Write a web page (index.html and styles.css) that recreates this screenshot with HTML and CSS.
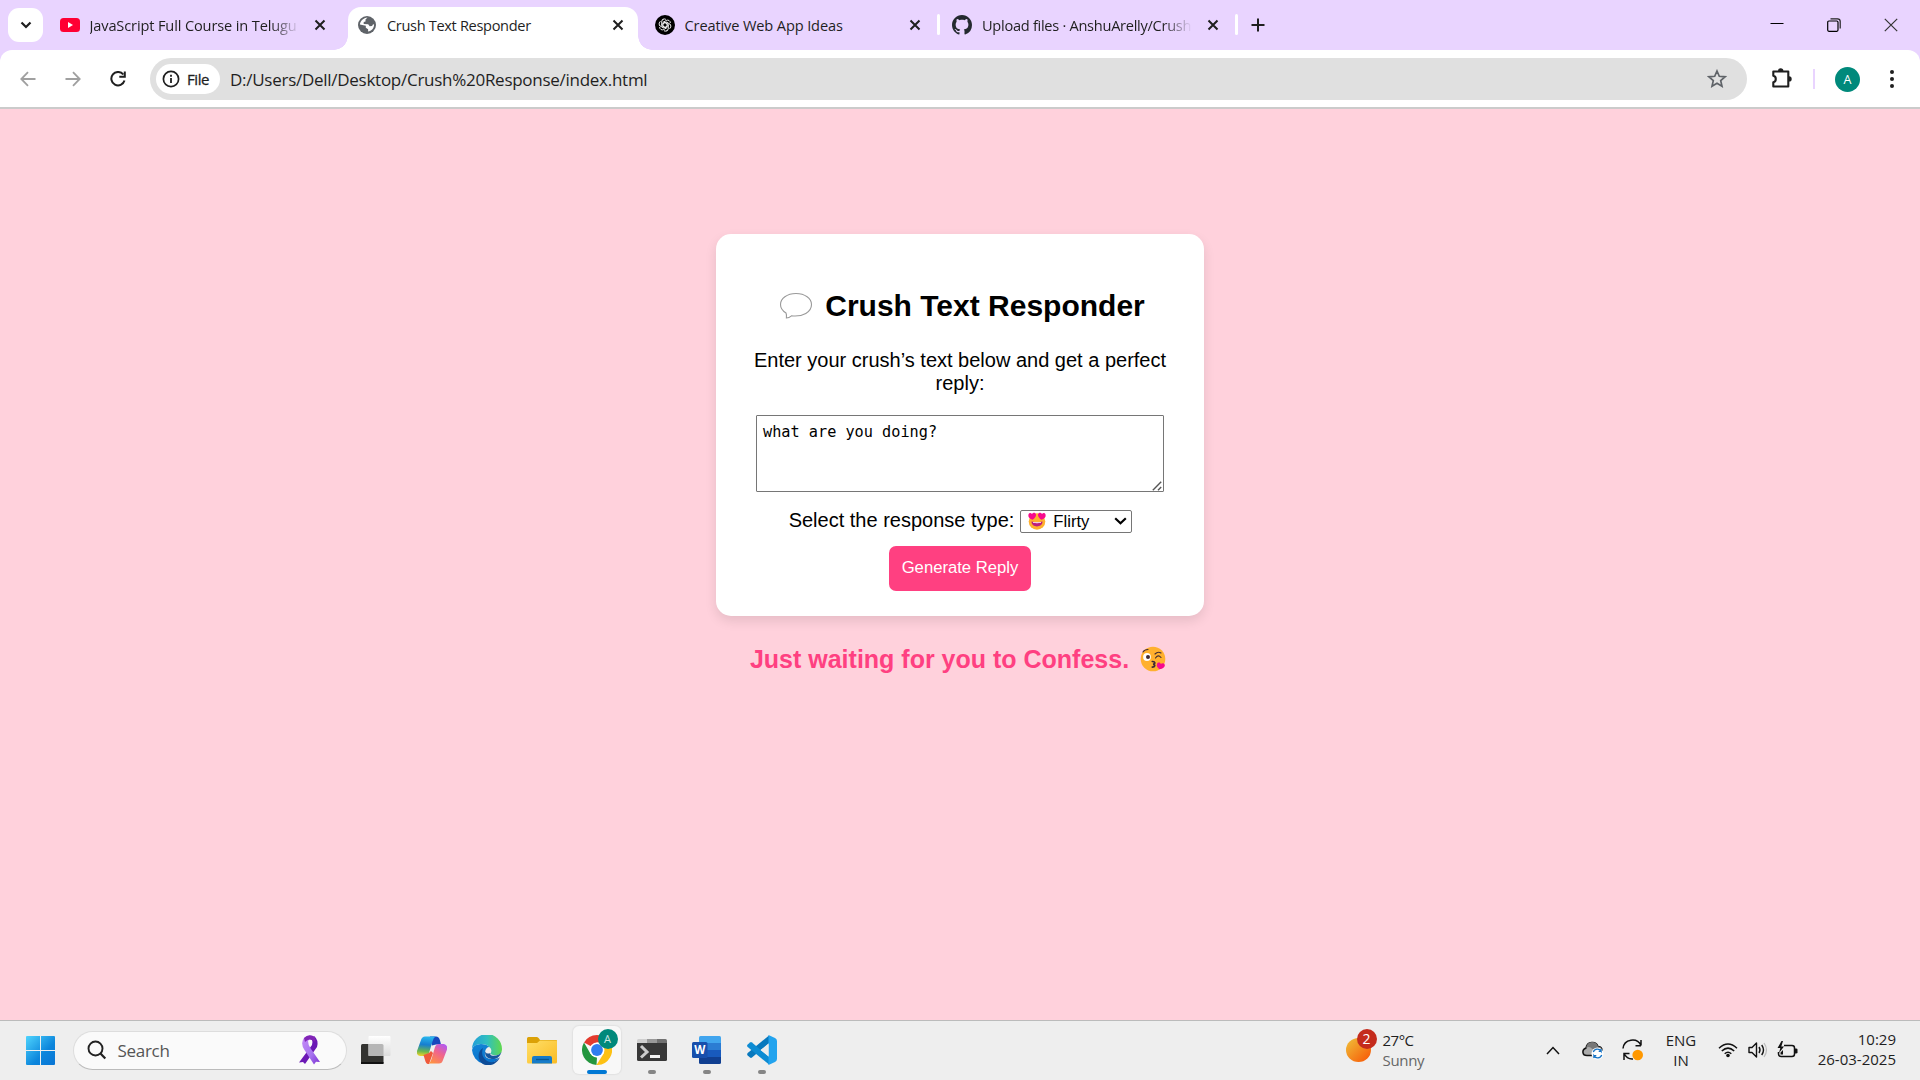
FILE: index.html
```html
<!DOCTYPE html>
<html lang="en">
<head>
<meta charset="utf-8">
<title>Crush Text Responder</title>
<link rel="stylesheet" href="styles.css">
</head>
<body>
<header class="tabstrip">
  <button class="tab-search" aria-label="Search tabs"><svg width="12" height="8" viewBox="0 0 12 8"><path d="M1.5 1.5 6 6l4.500-4.500" fill="none" stroke="#1f1f1f" stroke-width="2.200"/></svg></button>
  <div class="tab">
    <svg width="20" height="20" viewBox="0 0 20 20"><rect y="3" width="20" height="14" rx="3.500" fill="#ff0033"/><path d="M8 7v6l5-3z" fill="#fff"/></svg>
    <span class="tab-title fade t1">JavaScript Full Course in Telugu</span>
    <svg class="x" viewBox="0 0 12 12"><path d="m1.500 1.500 9 9m0-9-9 9"/></svg>
  </div>
  <div class="tab active">
    <svg width="20" height="20" viewBox="0 0 20 20"><circle cx="10" cy="10" r="9" fill="#5f6368"/><path d="M10.500 2.600 8.500 4.500v2L6.700 7v2l4.500.2 1.500 2 2.400-.2.800-1.600 1.200-.2c0 4-2.500 6.700-6 7.300v-2.200l-2.300-1.500v-2L2.900 9.600C3.300 6 6.500 2.900 10.500 2.600z" fill="#fff"/><path d="m12.500 5 1.500 2h-2.200l-.8-1z" fill="#5f6368"/></svg>
    <span class="tab-title t2">Crush Text Responder</span>
    <svg class="x" viewBox="0 0 12 12"><path d="m1.500 1.500 9 9m0-9-9 9"/></svg>
  </div>
  <div class="tab divided">
    <svg width="20" height="20" viewBox="0 0 20 20"><circle cx="10" cy="10" r="10" fill="#000"/><g fill="none" stroke="#fff" stroke-width=".9"><path id="petal" d="M8 12.800V7.400l3.200-1.900c2-1.100 4.200.3 4.200 2.500"/><use href="#petal" transform="rotate(60 10 10)"/><use href="#petal" transform="rotate(120 10 10)"/><use href="#petal" transform="rotate(180 10 10)"/><use href="#petal" transform="rotate(240 10 10)"/><use href="#petal" transform="rotate(300 10 10)"/></g></svg>
    <span class="tab-title t3">Creative Web App Ideas</span>
    <svg class="x" viewBox="0 0 12 12"><path d="m1.500 1.500 9 9m0-9-9 9"/></svg>
  </div>
  <div class="tab divided">
    <svg width="20" height="20" viewBox="0 0 16 16"><path fill="#24292f" d="M8 0C3.580 0 0 3.580 0 8c0 3.540 2.290 6.530 5.470 7.590.4.070.55-.17.55-.38 0-.19-.01-.82-.01-1.490-2.010.37-2.530-.49-2.690-.94-.09-.23-.48-.94-.82-1.130-.28-.15-.68-.52-.01-.53.63-.01 1.080.58 1.230.82.72 1.210 1.870.87 2.330.66.07-.52.28-.87.51-1.070-1.780-.2-3.640-.89-3.640-3.950 0-.87.31-1.590.82-2.150-.08-.2-.36-1.020.08-2.120 0 0 .67-.21 2.200.82.640-.18 1.320-.27 2-.27s1.360.09 2 .27c1.530-1.040 2.200-.82 2.200-.82.44 1.100.16 1.920.08 2.120.51.56.82 1.270.82 2.150 0 3.070-1.870 3.750-3.650 3.950.29.25.54.73.54 1.480 0 1.070-.01 1.930-.01 2.200 0 .21.15.46.55.38A8.013 8.013 0 0 0 16 8c0-4.420-3.580-8-8-8z"/></svg>
    <span class="tab-title fade t4">Upload files · AnshuArelly/Crush</span>
    <svg class="x" viewBox="0 0 12 12"><path d="m1.500 1.500 9 9m0-9-9 9"/></svg>
  </div>
  <svg class="new-tab" width="14" height="14" viewBox="0 0 14 14"><path d="M7 .5v13M.5 7h13" stroke="#1f1f1f" stroke-width="2"/></svg>
  <div class="window-controls">
    <svg viewBox="0 0 14 14"><path d="M.5 5.500h13" stroke="#000" fill="none"/></svg>
    <svg viewBox="0 0 14 14"><path d="M3.500.8h7q2.700 0 2.700 2.700v7" fill="none" stroke="#222" stroke-width="1.200"/><rect x=".7" y="3" width="10.300" height="10.300" rx="1.200" fill="none" stroke="#000" stroke-width="1.200"/></svg>
    <svg viewBox="0 0 14 14"><path d="m.8.8 12.400 12.400m0-12.400L.8 13.200" stroke="#333" stroke-width="1.200"/></svg>
  </div>
</header>
<div class="toolbar-wrap">
<nav class="toolbar">
  <svg class="nav-icon" viewBox="0 0 16 16"><path d="M15.500 8H1.500M8 1.200 1.300 8 8 14.800" fill="none" stroke="#a0a0a0" stroke-width="1.800"/></svg>
  <svg class="nav-icon" viewBox="0 0 16 16"><path d="M.5 8h14M8 1.200 14.700 8 8 14.800" fill="none" stroke="#a0a0a0" stroke-width="1.800"/></svg>
  <svg class="nav-icon" viewBox="0 0 16 16"><path d="M13.300 3.500A6.700 6.700 0 1 0 14.500 9.500M14.800.5v5.300H9.300" fill="none" stroke="#1f1f1f" stroke-width="2"/></svg>
  <div class="omnibox">
    <div class="chip"><svg width="18" height="18" viewBox="0 0 18 18"><circle cx="9" cy="9" r="7.600" fill="none" stroke="#1f1f1f" stroke-width="1.700"/><path d="M9 8v5M9 4.800v1.900" stroke="#1f1f1f" stroke-width="1.800"/></svg><span class="chip-text">File</span></div>
    <span class="url">D:/Users/Dell/Desktop/Crush%20Response/index.html</span>
    <svg class="star" width="20" height="20" viewBox="0 0 20 20"><path d="m10 2 2.300 5.300 5.700.5-4.300 3.800 1.300 5.700-5-3-5 3 1.300-5.700L2 7.800l5.700-.5z" fill="none" stroke="#5f6368" stroke-width="1.700"/></svg>
  </div>
  <svg class="puzzle" width="22" height="22" viewBox="0 0 22 22"><path d="M2.300 3.500h15v15h-15v-4.200c3.300-.5 3.300-6 0-6.500z" fill="none" stroke="#1f1f1f" stroke-width="2.100" stroke-linejoin="round"/><path d="M7 3a2.700 2.700 0 0 1 5.400 0zM18 8.200a2.700 2.700 0 0 1 0 5.400z" fill="#1f1f1f"/></svg>
  <i class="bar"></i>
  <div class="avatar">A</div>
  <svg class="dots" width="4" height="18" viewBox="0 0 4 18" fill="#1f1f1f"><circle cx="2" cy="2" r="2"/><circle cx="2" cy="9" r="2"/><circle cx="2" cy="16" r="2"/></svg>
</nav>
</div>
<main class="page">
  <section class="card">
    <h1><svg width="34" height="28" viewBox="0 0 34 28"><path d="M17 1.500C8 1.500 1.500 6.500 1.500 12.500c0 4 2.500 6.700 5.500 8.500.8 2 .6 3.700.4 5 2.300-.1 3.800-1.100 5.100-2.200C24 25 32.500 20 32.500 12.500 32.500 6.500 26 1.500 17 1.500z" fill="#fff" stroke="#999" stroke-width="1.100"/></svg><span>Crush Text Responder</span></h1>
    <p>Enter your crush’s text below and get a perfect reply:</p>
    <div class="field">
      <textarea spellcheck="false">what are you doing?</textarea>
      <svg class="grip" width="10" height="10" viewBox="0 0 10 10"><path d="M.8 9.200 9.200.8M6 9.200l3.200-3.200" stroke="#555" stroke-width="1.400"/></svg>
    </div>
    <div class="choice">
      <label>Select the response type:</label>
      <div class="select">
        <svg width="18" height="18" viewBox="0 0 18 18"><circle cx="9" cy="9.500" r="8.300" fill="#ffb02e"/><path d="M3.500 9.500q5.500 1.500 11 0c0 6.500-11 6.500-11 0z" fill="#bb1d80"/><path d="M5 9.900q4 .9 8 0v.8q-4 .9-8 0z" fill="#fff"/><path id="heart" d="M4.500 7.800C1 6.500 0 4.700.4 2.700.8.800 2.800.4 4 1.900 5 .2 7.600.5 8 2.500c.3 2-1.300 3.900-3.500 5.300z" fill="#f70a8d"/><use href="#heart" transform="matrix(-1 0 0 1 18 0)"/></svg>
        <span>Flirty</span>
        <svg class="caret" width="13" height="8" viewBox="0 0 13 8"><path d="m1.200 1.200 5.300 5 5.300-5" fill="none" stroke="#000" stroke-width="2.200"/></svg>
      </div>
    </div>
    <button class="generate">Generate Reply</button>
  </section>
  <div class="reply"><span>Just waiting for you to Confess.</span>
    <svg width="26" height="26" viewBox="0 0 26 26"><circle cx="13" cy="13" r="12.300" fill="#ffb02e"/><circle cx="7" cy="11" r="3.900" fill="#fff"/><circle cx="8" cy="11" r="2" fill="#402a32"/><path d="M15.500 12q2.500-4 5.500-.5M15 8q3-3 6-1M3 6q1.500-2.500 5-2.500" fill="none" stroke="#402a32" stroke-width="1.100" stroke-linecap="round"/><path d="M12.300 15.500c3-.2 3.400 2.200.8 2.700 2.600.5 2 2.900-.8 2.900" fill="none" stroke="#402a32" stroke-width="1.700" stroke-linecap="round"/><path d="M19.500 23.200c-2.200-1.500-3.200-3.500-2.500-5.300.8-1.900 3.200-1.600 3.800 0 1.400-1.400 3.700-.8 4 1 .3 2-2 3.700-5.300 4.300z" fill="#f70a8d"/></svg>
  </div>
</main>
<footer class="taskbar">
  <svg class="start" width="29" height="29" viewBox="0 0 29 29"><defs><linearGradient id="win" x1="0" y1="0" x2="29" y2="29" gradientUnits="userSpaceOnUse"><stop stop-color="#4fd4fd"/><stop offset=".6" stop-color="#0c86dc"/><stop offset="1" stop-color="#0874d4"/></linearGradient></defs><path d="M1 0h13v14H0V1q0-1 1-1zm14 0h13q1 0 1 1v13H15zM0 15h14v14H1q-1 0-1-1zm15 0h14v13q0 1-1 1H15z" fill="url(#win)"/></svg>
  <div class="search">
    <svg width="20" height="20" viewBox="0 0 20 20"><circle cx="8.500" cy="8.500" r="7" fill="none" stroke="#222" stroke-width="1.900"/><path d="m13.500 13.500 4.800 5" stroke="#222" stroke-width="2.200"/></svg>
    <span>Search</span>
    <svg class="ribbon" width="22" height="30" viewBox="0 0 22 30"><defs><linearGradient id="rib" x1="0" y1="0" x2="1" y2="1"><stop stop-color="#c68cf8"/><stop offset=".6" stop-color="#a572ef"/><stop offset="1" stop-color="#7a2ed0"/></linearGradient></defs><path d="M15 1q5 4 3 11L6 29l-2-2-4 .5L13 10q1-3 0-5z" fill="#6b19b5"/><path d="M5 3Q9-1 15 1.500l1 4q-5-3-7 .5 0 4 3 8l9 13-4-.3-2 2.800L5.500 15Q1 8 5 3z" fill="url(#rib)"/><path d="M5 3Q10-2 16 2l.5 5Q10 2 6 7z" fill="#8124b6"/></svg>
  </div>
  <div class="apps">
    <div class="app"><svg viewBox="0 0 30 30"><defs><linearGradient id="tv" x2="0" y2="1"><stop stop-color="#fff"/><stop offset="1" stop-color="#dcdcdc"/></linearGradient></defs><rect y="9" width="22.500" height="20" rx="1.500" fill="#333330"/><path d="M0 27h22.500v2H0z" fill="#111"/><rect x="7.500" y="1" width="22" height="20" rx="1" fill="url(#tv)"/><path d="M7.500 9H21q1.500 0 1.500 1.500V21h-15z" fill="#b6b6b6"/></svg></div>
    <div class="app"><svg viewBox="0 0 30 30"><defs><linearGradient id="co1" x1=".3" y1="0" x2=".2" y2="1"><stop stop-color="#28b5ed"/><stop offset=".4" stop-color="#167ed1"/><stop offset=".75" stop-color="#6ab650"/><stop offset="1" stop-color="#f4d329"/></linearGradient><linearGradient id="co2" x1=".8" y1="0" x2=".2" y2="1"><stop stop-color="#b35af0"/><stop offset=".45" stop-color="#f0648c"/><stop offset="1" stop-color="#ff9340"/></linearGradient></defs><path d="M13 1.500h6q3 0 4 4l1 4h-5l-4 1z" fill="#1747bd"/><path d="M8 1.500h10.500q-2 1-3 5L12 18q-1 3-4.500 3H3q-4-1-3-5L4 5q1-3.500 4-3.500z" fill="url(#co1)"/><path d="M6.500 20 12 18l2-2 2 2-4 11h-1q-2 0-3-4z" fill="#ef593b"/><path d="M22 28.500H11.500q2-1 3-4.500L18 12q1-3 4.500-3H27q4 1 3 5.500L26 25q-1 3.500-4 3.500z" fill="url(#co2)"/></svg></div>
    <div class="app"><svg viewBox="0 0 30 30"><defs><linearGradient id="ed1"><stop stop-color="#229dd9"/><stop offset=".5" stop-color="#30bfc0"/><stop offset="1" stop-color="#60d84d"/></linearGradient><linearGradient id="ed2" x2=".3" y2="1"><stop stop-color="#1385d6"/><stop offset="1" stop-color="#0872cd"/></linearGradient></defs><path d="M0 15Q1 9 9 9q10 0 10 8-3-4-6 1-1 5 6 6l8-1a15 15 0 0 1-27-8z" fill="url(#ed2)"/><path d="M11 13q-3 8 4 13 6 3 10-1l3-3c-3 7-9 9-14 7.900C7 29 3 18 11 13z" fill="#0d4c98"/><path d="M0 14A15 15 0 0 1 30 14c0 6-5 7-9 6q-4-1-2-3c0-6-5-8-9-8-5 0-9 2-10 5z" fill="url(#ed1)"/><path d="M14 14q3-4 5 0 1 2-.3 4-.6 2 2.500 2.500 5 1 8-2.500-1 5-6 6-8 0-10-5-.6-3 .8-5z" fill="#ededed"/><path d="M18.500 18q-1 3 3 2.700 6 0 8-4c-2 7-7 8-11 7-5-1-6-5-5-7q1 3 5 1.300z" fill="#17569c"/></svg></div>
    <div class="app"><svg viewBox="0 0 30 30"><defs><linearGradient id="fd" x2="1" y2="1"><stop stop-color="#ffdf68"/><stop offset="1" stop-color="#fabb23"/></linearGradient></defs><path d="M0 3.500Q0 2 1.500 2H10q1 0 2 1.500L13 5h16q1 0 1 1v5H0z" fill="#dba107"/><path d="M0 8h10l3-2.500h16q1 0 1 1V27q0 1.500-1.500 1.500h-27Q0 28.500 0 27z" fill="url(#fd)"/><path d="M5 28.500V23q0-2 2-2h16q2 0 2 2v5.500z" fill="#167bc8"/><path d="M9 24.500h13" stroke="#085792" stroke-width="1.300"/></svg></div>
    <div class="app current"><svg viewBox="0 0 30 30"><path d="M15 0a15 15 0 0 1 13 7.500H15L8.500 11 2 7.500A15 15 0 0 1 15 0z" fill="#e33b2e"/><path d="m2 7.500 6.500 11.300L15 22.500 14.500 30A15 15 0 0 1 2 7.500z" fill="#23963e"/><path d="M28 7.500A15 15 0 0 1 14.500 30l7-11.200L21 8z" fill="#fdc113"/><circle cx="15" cy="15" r="7.500" fill="#fff"/><circle cx="15" cy="15" r="5.900" fill="#2f7df0"/></svg><span class="badge-a">A</span></div>
    <div class="app running"><svg viewBox="0 0 30 30"><path d="M0 8V5.500Q0 4 1.500 4H10v4z" fill="#cfcfcf"/><path d="M10 4h10v4H10z" fill="#999"/><path d="M20 4h8.500Q30 4 30 5.500V8H20z" fill="#717171"/><path d="M0 8h30v16.500q0 1.500-1.500 1.500h-27Q0 26 0 24.500z" fill="#383838"/><path d="m4 11 6 6-6 5.500" fill="none" stroke="#ccc" stroke-width="3"/><path d="M13 20h10v3H13z" fill="#f2f2f2"/></svg></div>
    <div class="app running"><svg viewBox="0 0 30 30"><path d="M7 8V2.500Q7 1 8.500 1h19Q29 1 29 2.500V8z" fill="#41a5ee"/><path d="M7 8h22v7H7z" fill="#2b7cd3"/><path d="M7 15h22v7H7z" fill="#185abd"/><path d="M7 22h22v5.500q0 1.500-1.500 1.500h-19Q7 29 7 27.500z" fill="#103f91"/><rect y="7" width="15.500" height="16" rx="1.500" fill="#174fac"/><text x="7.700" y="19.200" text-anchor="middle" font-family="Open Sans, sans-serif" font-weight="700" font-size="11.500" fill="#fff">W</text></svg></div>
    <div class="app running"><svg viewBox="0 0 30 30"><path d="m22 8-17 14.500q-1 .8-2 0l-2.300-2q-1.200-1.200 0-2.500L22 .5z" fill="#0878bd"/><path d="M22 22 5 7.500q-1-.8-2 0l-2.300 2q-1.200 1.200 0 2.500L22 29.500z" fill="#0c8bd3"/><path d="M21.500 0 28 3q2 1 2 3v18q0 2-2 3l-6.500 3z" fill="#22a3ee"/><path d="M21.500 9v12L13.500 15z" fill="#ededed"/></svg></div>
  </div>
  <div class="weather">
    <div class="sun"><span class="count">2</span></div>
    <div class="lines"><span class="w1">27°C</span><span class="w2">Sunny</span></div>
  </div>
  <div class="tray">
    <svg width="14" height="9" viewBox="0 0 14 9"><path d="m1 8 6-6.500L13 8" fill="none" stroke="#111" stroke-width="1.500"/></svg>
    <svg class="cloud" width="22" height="20" viewBox="0 0 22 20"><path d="M5 15.500C0 15.500-.5 9.500 4 8 5 1.500 14 .5 16 6.500c3 0 4 2 4.200 4L12 15.500z" fill="#aaa" stroke="#111" stroke-width="1.500"/><path d="M4 8Q5 2 10 2q5 0 6 4.500 3 0 4 3Q16 6 11 10 8 5 4 8z" fill="#777"/><circle cx="15.500" cy="13.500" r="6" fill="#fff"/><path d="M11.300 12a4.300 4.300 0 0 1 7.800-.8V9m0 2.400h-2.400M19.700 15a4.300 4.300 0 0 1-7.800.8V18m0-2.400h2.400" fill="none" stroke="#1673c5" stroke-width="1.300"/></svg>
    <svg class="update" width="22" height="22" viewBox="0 0 22 22"><path d="M1 9.500C2 0 15-2 19 6.500V1m0 5.700h-5.500M2 21v-6.500h5.500M2 14.500q3 6 9 5.500" fill="none" stroke="#111" stroke-width="1.500"/><circle cx="15.700" cy="16" r="5.300" fill="#ff9800"/></svg>
    <div class="lang"><span class="g1">ENG</span><span class="g2">IN</span></div>
    <svg class="wifi" width="20" height="16" viewBox="0 0 20 16"><g fill="none" stroke="#111" stroke-width="1.500"><path d="M1 6.200q9-8.500 18 0M3.800 9q6.200-5.800 12.400 0M6.700 11.700q3.300-3 6.600 0"/></g><circle cx="10" cy="13.500" r="1.800" fill="#111"/></svg>
    <svg class="volume" width="20" height="16" viewBox="0 0 20 16"><path d="M1 5.500h3L8.500 1v14L4 10.500H1z" fill="none" stroke="#111" stroke-width="1.400" stroke-linejoin="round"/><path d="M11 5q2 3 0 6M13.700 3q3.600 5 0 10" fill="none" stroke="#111" stroke-width="1.400"/><path d="M16 1q5 7 0 14" fill="none" stroke="#bbb" stroke-width="1.200"/></svg>
    <svg class="battery" width="21" height="18" viewBox="0 0 21 18"><path d="M7 4.500h8q2.500 0 2.500 2.500v6q0 2.500-2.500 2.500H4Q1.500 15.500 1.500 13v-2" fill="none" stroke="#111" stroke-width="1.500"/><path d="M18 7.500h1q1.500 0 1.500 1.200v2.500q0 1.300-1.500 1.300h-1z" fill="#111"/><path d="M4.500 0 .5 7h2.800L2 12l5-6.500H4.300L6 0zM3.500 13.500v-2L6 9v4.500z" fill="#111"/></svg>
    <div class="clock"><span class="c1">10:29</span><span class="c2">26-03-2025</span></div>
  </div>
</footer>
</body>
</html>
```
FILE: styles.css
```css
* { box-sizing: border-box; }
html, body { margin: 0; height: 100%; }
body {
  display: flex; flex-direction: column; height: 1080px; overflow: hidden;
  font-family: "Open Sans", "Noto Sans", sans-serif; color: #1f1f1f; background: #ffd1dc;
}
svg { display: block; flex: none; }
span { white-space: nowrap; }
button { border: 0; padding: 0; }

/* tab strip */
.tabstrip { height: 50px; flex: none; display: flex; align-items: flex-start; padding-left: 8px; background: #e9d4ff; }
.tab-search { width: 35px; height: 34px; margin: 8px 7.5px 0 0; border-radius: 11px; background: #fff; display: flex; align-items: center; justify-content: center; }
.tab { position: relative; width: 289.5px; height: 43px; margin: 7px 8px 0 0; padding: 0 14px 7px 9px; display: flex; align-items: center; gap: 10px; }
.tab.active { background: #fff; border-radius: 13px 13px 0 0; }
.tab.active::before, .tab.active::after { content: ""; position: absolute; bottom: 0; width: 14px; height: 14px; }
.tab.active::before { left: -14px; background: radial-gradient(circle at 0 0, transparent 13.5px, #fff 14px); }
.tab.active::after { right: -14px; background: radial-gradient(circle at 100% 0, transparent 13.5px, #fff 14px); }
.tab.divided::after { content: ""; position: absolute; right: -5px; top: 7px; width: 3px; height: 21px; border-radius: 2px; background: #fff; }
.tab-title { flex: none; width: 210px; margin-right: auto; font-size: 14.6px; line-height: 24px; }
.fade { -webkit-mask-image: linear-gradient(90deg, #000 86%, transparent 100%); mask-image: linear-gradient(90deg, #000 86%, transparent 100%); }
.t1 { letter-spacing: -.14px; }
.t2 { letter-spacing: -.34px; }
.t3 { letter-spacing: -.13px; }
.t4 { letter-spacing: -.28px; }
.x { width: 12px; height: 12px; fill: none; stroke: #1f1f1f; stroke-width: 2; }
.new-tab { margin: 18px 0 0 10.5px; }
.window-controls { margin: 18px 22px 0 auto; display: flex; gap: 43px; }
.window-controls svg { width: 14px; height: 14px; }

/* toolbar */
.toolbar-wrap { flex: none; background: #e9d4ff; }
.toolbar { height: 59px; display: flex; align-items: center; padding: 1px 26px 0 20px; background: #fff; border-radius: 12px 12px 0 0; border-bottom: 2px solid #cbcbcb; }
.nav-icon { width: 16px; height: 16px; margin-right: 29px; }
.nav-icon + .nav-icon + .nav-icon { margin-right: 24px; }
.omnibox { flex: 1; height: 42px; border-radius: 21px; background: #e0e0e0; display: flex; align-items: center; padding: 0 20px 0 6px; }
.chip { width: 64px; height: 30px; border-radius: 15px; background: #fff; display: flex; align-items: center; padding-left: 6px; gap: 7px; }
.chip-text { font-size: 15px; -webkit-text-stroke: .3px; letter-spacing: -.4px; line-height: 20px; }
.url { margin-left: 10px; padding-top: 1px; font-size: 17px; letter-spacing: -.27px; line-height: 24px; }
.star { margin-left: auto; }
.puzzle { margin-left: 24px; }
.bar { width: 2px; height: 20px; margin-left: 20px; background: #e9d4ff; }
.avatar { width: 25px; height: 25px; margin-left: 20.5px; border-radius: 50%; background: #00897b; color: #fff; font-size: 12.5px; line-height: 25px; text-align: center; }
.dots { margin-left: 30px; }

/* page */
.page { flex: 1; display: flex; flex-direction: column; align-items: center; padding-top: 125px; font-family: "Liberation Sans", Arial, sans-serif; color: #000; }
.card { width: 488px; height: 382px; flex: none; padding: 50px 35px 25px; display: flex; flex-direction: column; align-items: center; background: #fff; border-radius: 15px; box-shadow: 0 5px 12px rgba(0, 0, 0, .1); text-align: center; }
h1 { display: flex; align-items: center; gap: 12px; margin: 4px 0 0 4px; font-size: 30px; line-height: 36px; }
p { margin: 25px 0 20px; font-size: 20px; line-height: 23px; }
.field { position: relative; width: 408px; height: 77px; flex: none; }
textarea { display: block; width: 100%; height: 100%; resize: none; padding: 7px 6px; border: 1px solid #767676; border-radius: 1px; font: 15.23px/19px "DejaVu Sans Mono", monospace; color: #000; overflow: hidden; outline: 0; }
.grip { position: absolute; right: 2px; bottom: 1px; }
.choice { display: flex; align-items: center; gap: 6px; margin: 17px 0 0 1px; height: 24px; }
.choice label { font-size: 20px; line-height: 23px; padding-bottom: 1px; }
.select { width: 112px; height: 23px; border: 1px solid #767676; border-radius: 2px; display: flex; align-items: center; padding: 0 4px 0 7px; font-size: 16.67px; }
.select span { margin-left: 7px; padding-top: 1px; }
.caret { margin-left: auto; }
.generate { width: 142px; height: 45px; flex: none; margin-top: 13px; padding-bottom: 2px; border-radius: 7px; background: #ff4081; color: #fff; font: 16.67px "Liberation Sans", Arial, sans-serif; }
.reply { display: flex; align-items: center; gap: 11px; margin: 18px 0 0 -4px; height: 50px; font-size: 25px; font-weight: 700; color: #ff4081; }

/* taskbar */
.taskbar { height: 60px; flex: none; display: flex; align-items: center; border-top: 1px solid #bbb; background: #eee; padding-left: 26px; }
.start { margin-right: 17.5px; }
.search { width: 274px; height: 39px; border: 1px solid #ddd; border-bottom-color: #bbb; border-radius: 20px; background: #fafafa; display: flex; align-items: center; padding: 0 25px 0 13px; margin-top: -1px; }
.search span { margin-left: 11px; font-size: 17px; letter-spacing: -.3px; color: #555; }
.ribbon { margin-left: auto; }
.apps { display: flex; margin: -1px 0 0 5.5px; }
.app { position: relative; width: 48px; height: 48px; margin-right: 7px; display: flex; align-items: center; justify-content: center; border-radius: 6px; }
.app + .app { left: .5px; }
.app svg { width: 30px; height: 30px; }
.app.current { background: #f8f8f8; box-shadow: 0 0 1px 1px #e2e2e2; }
.app.current::after, .app.running::after { content: ""; position: absolute; bottom: 0; left: 20px; width: 8px; height: 4px; border-radius: 2px; background: #858585; }
.app.current::after { left: 14px; width: 20px; background: #0078d4; }
.badge-a { position: absolute; left: 25px; top: 3px; width: 20px; height: 20px; border-radius: 50%; background: #00897b; color: #cde7e4; font-size: 11px; line-height: 20px; text-align: center; }
.weather { display: flex; align-items: center; gap: 12px; margin: -2px 0 0 553.5px; }
.sun { position: relative; width: 25px; height: 24px; border-radius: 50%; background: linear-gradient(135deg, #efc13a, #f7630c 85%); }
.count { position: absolute; left: 11px; top: -9px; width: 20px; height: 20px; border-radius: 50%; background: #c42b1c; color: #fff; font-size: 14px; line-height: 20px; text-align: center; }
.lines, .lang, .clock { display: flex; flex-direction: column; font-size: 15px; line-height: 20px; }
.clock { margin-top: -2px; }
.w1 { letter-spacing: -.5px; }
.w2 { color: #666; letter-spacing: -.3px; }
.tray { display: flex; align-items: center; margin: -1px 0 0 auto; padding-right: 24px; }
.cloud { margin-left: 22px; }
.update { margin-left: 18px; }
.lang { align-items: center; width: 34px; margin-left: 20px; }
.wifi { margin-left: 20px; }
.volume { margin-left: 10px; }
.battery { margin-left: 9px; }
.clock { align-items: flex-end; width: 80px; margin-left: 18px; }
```
